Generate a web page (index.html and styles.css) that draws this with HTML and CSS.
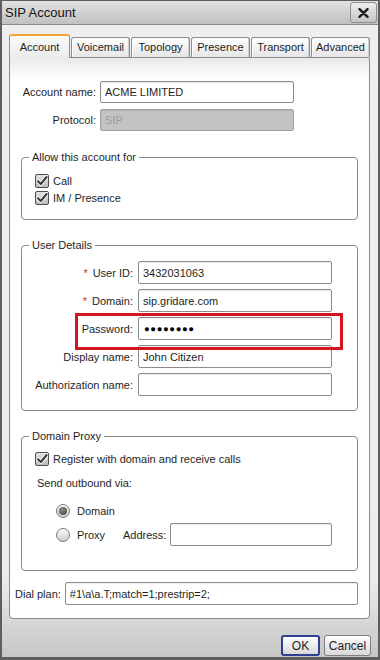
FILE: index.html
```html
<!DOCTYPE html>
<html lang="en">
<head>
  <meta charset="UTF-8" />
  <meta name="viewport" content="width=device-width, initial-scale=1.0">
  <title>SIP Account</title>
  <link rel="stylesheet" href="styles.css">
</head>
<body>

  <div class="window">
    <div class="titlebar">
      <span class="title">SIP Account</span>
      <button class="close" title="Close">
        <svg width="11" height="10" viewBox="0 0 11 10"><path d="M1.5 1.2 L9.5 8.8 M9.5 1.2 L1.5 8.8" stroke="#1a1a1a" stroke-width="2.4" stroke-linecap="round"/></svg>
      </button>
    </div>

    <div class="tabs">
      <div class="tab active">Account</div>
      <div class="tab">Voicemail</div>
      <div class="tab">Topology</div>
      <div class="tab">Presence</div>
      <div class="tab">Transport</div>
      <div class="tab">Advanced</div>
    </div>

    <div class="panel">
      <div class="top-fields">
        <div class="row">
          <label for="accountName">Account name:</label>
          <input id="accountName" type="text" value="ACME LIMITED" />
        </div>
        <div class="row">
          <label for="protocol">Protocol:</label>
          <input id="protocol" type="text" value="SIP" disabled />
        </div>
      </div>

      <fieldset class="group">
        <legend>Allow this account for</legend>
        <div class="group-body checks">
          <div class="check-row">
            <span class="check"><svg width="12" height="12" viewBox="0 0 12 12"><path d="M2 6.3 L4.8 9 L10.6 2" fill="none" stroke="#fff" stroke-width="3.8" stroke-linecap="round" stroke-linejoin="round"/><path d="M2 6.3 L4.8 9 L10.6 2" fill="none" stroke="#3c3c3c" stroke-width="2.1" stroke-linecap="round" stroke-linejoin="round"/></svg></span>
            Call
          </div>
          <div class="check-row">
            <span class="check"><svg width="12" height="12" viewBox="0 0 12 12"><path d="M2 6.3 L4.8 9 L10.6 2" fill="none" stroke="#fff" stroke-width="3.8" stroke-linecap="round" stroke-linejoin="round"/><path d="M2 6.3 L4.8 9 L10.6 2" fill="none" stroke="#3c3c3c" stroke-width="2.1" stroke-linecap="round" stroke-linejoin="round"/></svg></span>
            IM / Presence
          </div>
        </div>
      </fieldset>

      <fieldset class="group">
        <legend>User Details</legend>
        <div class="group-body details">
          <div class="row">
            <label for="userId"><span class="req">*</span>User ID:</label>
            <input id="userId" type="text" value="3432031063" />
          </div>
          <div class="row">
            <label for="domain"><span class="req">*</span>Domain:</label>
            <input id="domain" type="text" value="sip.gridare.com" />
          </div>
          <div class="row highlight">
            <label for="password">Password:</label>
            <input id="password" class="pw" type="text" value="●●●●●●●●" />
          </div>
          <div class="row">
            <label for="displayName">Display name:</label>
            <input id="displayName" type="text" value="John Citizen" />
          </div>
          <div class="row">
            <label for="authName">Authorization name:</label>
            <input id="authName" type="text" value="" />
          </div>
        </div>
      </fieldset>

      <fieldset class="group">
        <legend>Domain Proxy</legend>
        <div class="group-body proxy">
          <div class="check-row">
            <span class="check"><svg width="12" height="12" viewBox="0 0 12 12"><path d="M2 6.3 L4.8 9 L10.6 2" fill="none" stroke="#fff" stroke-width="3.8" stroke-linecap="round" stroke-linejoin="round"/><path d="M2 6.3 L4.8 9 L10.6 2" fill="none" stroke="#3c3c3c" stroke-width="2.1" stroke-linecap="round" stroke-linejoin="round"/></svg></span>
            Register with domain and receive calls
          </div>
          <div class="via">Send outbound via:</div>
          <div class="radio-row first">
            <span class="radio on"></span>
            <span class="radio-text">Domain</span>
          </div>
          <div class="radio-row">
            <span class="radio"></span>
            <span class="radio-text">Proxy</span>
            <label for="address">Address:</label>
            <input id="address" type="text" value="" />
          </div>
        </div>
      </fieldset>

      <div class="row dialplan">
        <label for="dialPlan">Dial plan:</label>
        <input id="dialPlan" type="text" value="#1\a\a.T;match=1;prestrip=2;" />
      </div>
    </div>

    <div class="footer">
      <button class="btn default">OK</button>
      <button class="btn">Cancel</button>
    </div>
  </div>

</body>
</html>
```

FILE: styles.css
```css
* {
  box-sizing: border-box;
}

body {
  margin: 0;
  font-family: "Liberation Sans", Arial, sans-serif;
  font-size: 11px;
  color: #1e1e1e;
  background: #fff;
}

.window {
  width: 380px;
  height: 660px;
  display: flex;
  flex-direction: column;
  border: 2px solid #5e5e5e;
  border-top-width: 1px;
  border-bottom-width: 3px;
  background: linear-gradient(to bottom, #efefef 0%, #ececec 88%, #c6c6c6 100%);
}

.titlebar {
  height: 24px;
  flex: none;
  display: flex;
  align-items: center;
  justify-content: space-between;
  padding: 0 1px 0 3px;
  border-bottom: 1px solid #8a8a8a;
  background: linear-gradient(to bottom, #e2e2e2, #c0c0c0);
}

.title {
  font-size: 13px;
  color: #141414;
}

.close {
  width: 27px;
  height: 21px;
  display: flex;
  align-items: center;
  justify-content: center;
  padding: 0;
  border: 1px solid #8e8e8e;
  border-radius: 3px;
  background: linear-gradient(to bottom, #eeeeee, #c4c4c4);
}

/* tabs */
.tabs {
  flex: none;
  height: 23px;
  margin-top: 9px;
  padding-left: 7px;
  display: flex;
  align-items: flex-end;
  gap: 1px;
}

.tab {
  width: 59px;
  height: 20px;
  line-height: 18px;
  text-align: center;
  color: #1e1e1e;
  border: 1px solid #8d8d8d;
  border-bottom: none;
  border-radius: 3px 3px 0 0;
  background: linear-gradient(to bottom, #ffffff, #e6e6e6);
  box-shadow: inset 1px 1px 0 #fff, inset -1px 0 0 #d0d0d0;
}

.tab.active {
  width: 61px;
  height: 24px;
  line-height: 22px;
  margin-bottom: -1px;
  position: relative;
  z-index: 1;
  border-top: 2px solid #f0a537;
  background: linear-gradient(to bottom, #fbfbfb, #ebebeb);
  box-shadow: none;
}

/* panel */
.panel {
  flex: none;
  margin: 0 8px 0 7px;
  padding: 23px 11px 13px 11px;
  border: 1px solid #8a8a8a;
  border-radius: 0 2px 4px 4px;
  background: linear-gradient(to bottom, #e9e9e9 0px, #ffffff 22px, #ffffff 100%);
}

.row {
  display: flex;
  align-items: center;
}

.row label {
  text-align: right;
  white-space: nowrap;
}

input[type="text"] {
  font: inherit;
  color: #1e1e1e;
  height: 23px;
  padding: 0 4px;
  margin: 0;
  border: 1px solid #8c8c8c;
  border-radius: 2px;
  background: #fff;
  box-shadow: inset 0 1px 1px rgba(0,0,0,0.08);
  outline: none;
}

.top-fields {
  display: flex;
  flex-direction: column;
  gap: 6px;
}

.top-fields label {
  width: 75px;
  margin-right: 4px;
}

.top-fields input {
  width: 194px;
  height: 22px;
}

#protocol {
  background: #c3c3c3;
  border-color: #a0a0a0;
  color: #9c9c9c;
}

/* groups */
.group {
  margin: 19px 0 0;
  padding: 0;
  border: 1px solid #8a8a8a;
  border-radius: 4px;
  min-width: 0;
}

.group + .group {
  margin-top: 18px;
}

.group legend {
  margin-left: 7px;
  padding: 0 3px;
  line-height: 14px;
}

.group-body.checks {
  padding: 8px 12px 13px 13px;
}

.check-row {
  height: 17px;
  display: flex;
  align-items: center;
  gap: 4px;
}

.check {
  width: 14px;
  height: 14px;
  flex: none;
  display: flex;
  align-items: center;
  justify-content: center;
  border: 1px solid #4e4e4e;
  border-radius: 2px;
  background: linear-gradient(to bottom, #e2e2e2, #bdbdbd);
}

.group-body.details {
  padding: 9px 12px 14px 0;
  display: flex;
  flex-direction: column;
  gap: 5px;
}

.details label {
  width: 111px;
  margin-right: 5px;
}

.details input {
  width: 194px;
}

.req {
  color: #d42a2a;
  margin-right: 5px;
}

.highlight {
  position: relative;
}

.highlight::after {
  content: "";
  position: absolute;
  left: 53px;
  top: -4px;
  width: 262px;
  height: 31px;
  border: 3px solid #d41420;
  pointer-events: none;
}

input.pw {
  font-size: 9.5px;
  letter-spacing: 0.6px;
  padding-left: 5px;
  color: #000;
}

.group-body.proxy {
  padding: 7px 12px 24px 13px;
}

.via {
  margin-top: 8px;
  padding-left: 2px;
  line-height: 17px;
}

.radio-row {
  display: flex;
  align-items: center;
  margin-top: 4px;
  padding-left: 21px;
}

.radio-row.first {
  margin-top: 10px;
  height: 17px;
}

.radio {
  width: 14px;
  height: 14px;
  flex: none;
  display: flex;
  align-items: center;
  justify-content: center;
  margin-right: 7px;
  border: 1px solid #7a7a7a;
  border-radius: 50%;
  background: linear-gradient(to bottom, #fafafa, #cdcdcd);
}

.radio.on::after {
  content: "";
  width: 8px;
  height: 8px;
  border-radius: 50%;
  background: radial-gradient(circle at 40% 35%, #8a8a8a, #3e3e3e);
}

.radio-row .radio-text {
  width: 46px;
}

.radio-row label {
  margin-right: 4px;
}

.radio-row input {
  width: 162px;
}

.dialplan {
  margin: 11px 0 0 -6px;
}

.dialplan label {
  margin-right: 4px;
}

.dialplan input {
  flex: 1;
}

/* buttons */
.footer {
  flex: 1;
  display: flex;
  justify-content: flex-end;
  align-items: flex-start;
  gap: 4px;
  padding: 16px 7px 0 0;
}

.btn {
  height: 21px;
  padding: 0;
  font-family: "Liberation Sans", Arial, sans-serif;
  font-size: 12px;
  color: #1e1e1e;
  border: 1px solid #7e7e7e;
  border-radius: 3px;
  background: linear-gradient(to bottom, #ffffff, #d8d8d8);
  width: 47px;
}

.btn.default {
  width: 39px;
  border: 2px solid #2d3f95;
}
```
